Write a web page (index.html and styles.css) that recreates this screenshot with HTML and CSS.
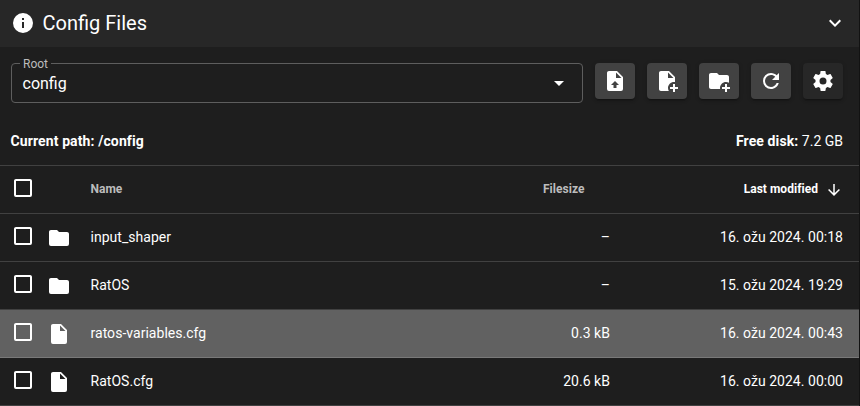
FILE: index.html
```html
<!DOCTYPE html>
<html lang="en">
<head>
<meta charset="utf-8">
<title>Config Files</title>
<link rel="stylesheet" href="styles.css">
</head>
<body>
<svg class="defs" width="0" height="0" aria-hidden="true">
  <symbol id="checkbox" viewBox="0 0 24 24"><path d="M19,3H5C3.89,3 3,3.89 3,5V19A2,2 0 0,0 5,21H19A2,2 0 0,0 21,19V5C21,3.89 20.1,3 19,3M19,5V19H5V5H19Z"/></symbol>
  <symbol id="folder" viewBox="0 0 24 24"><path d="M10,4H4C2.89,4 2,4.89 2,6V18A2,2 0 0,0 4,20H20A2,2 0 0,0 22,18V8C22,6.89 21.1,6 20,6H12L10,4Z"/></symbol>
  <symbol id="file" viewBox="0 0 24 24"><path d="M13,9V3.5L18.5,9M6,2C4.89,2 4,2.89 4,4V20A2,2 0 0,0 6,22H18A2,2 0 0,0 20,20V8L14,2H6Z"/></symbol>
</svg>
<main class="panel">
  <header class="panel-header">
    <svg class="icon" viewBox="0 0 24 24"><path d="M13,9H11V7H13M13,17H11V11H13M12,2A10,10 0 0,0 2,12A10,10 0 0,0 12,22A10,10 0 0,0 22,12A10,10 0 0,0 12,2Z"/></svg>
    <h1>Config Files</h1>
    <svg class="icon collapse" viewBox="0 0 24 24"><path d="M7.41,8.58L12,13.17L16.59,8.58L18,10L12,16L6,10L7.41,8.58Z"/></svg>
  </header>
  <div class="toolbar">
    <div class="select">
      <span class="select-label">Root</span>
      <span class="select-value">config</span>
      <svg class="icon" viewBox="0 0 24 24"><path d="M7,10L12,15L17,10H7Z"/></svg>
    </div>
    <button class="btn"><svg class="icon" viewBox="0 0 24 24"><path d="M14,2H6C4.89,2 4,2.89 4,4V20A2,2 0 0,0 6,22H18A2,2 0 0,0 20,20V8L14,2M13.5,16V19H10.5V16H8L12,12L16,16H13.5M13,9V3.5L18.5,9H13Z"/></svg></button>
    <button class="btn"><svg class="icon" viewBox="0 0 24 24"><path d="M14 2H6C4.89 2 4 2.89 4 4V20C4 21.11 4.89 22 6 22H13.81C13.28 21.09 13 20.05 13 19C13 15.69 15.69 13 19 13C19.34 13 19.67 13.03 20 13.08V8L14 2M13 9V3.5L18.5 9H13M23 20H20V23H18V20H15V18H18V15H20V18H23V20Z"/></svg></button>
    <button class="btn"><svg class="icon" viewBox="0 0 24 24"><path d="M13 19C13 19.34 13.04 19.67 13.09 20H4C2.9 20 2 19.11 2 18V6C2 4.89 2.89 4 4 4H10L12 6H20C21.1 6 22 6.89 22 8V13.81C21.12 13.3 20.1 13 19 13C15.69 13 13 15.69 13 19M20 18V15H18V18H15V20H18V23H20V20H23V18H20Z"/></svg></button>
    <button class="btn"><svg class="icon" viewBox="0 0 24 24"><path d="M17.65,6.35C16.2,4.9 14.21,4 12,4A8,8 0 0,0 4,12A8,8 0 0,0 12,20C15.73,20 18.84,17.45 19.73,14H17.65C16.83,16.33 14.61,18 12,18A6,6 0 0,1 6,12A6,6 0 0,1 12,6C13.66,6 15.14,6.69 16.22,7.78L13,11H20V4L17.65,6.35Z"/></svg></button>
    <button class="btn btn-dark"><svg class="icon" viewBox="0 0 24 24"><path d="M12,15.5A3.5,3.5 0 0,1 8.5,12A3.5,3.5 0 0,1 12,8.5A3.5,3.5 0 0,1 15.5,12A3.5,3.5 0 0,1 12,15.5M19.43,12.97C19.47,12.65 19.5,12.33 19.5,12C19.5,11.67 19.47,11.34 19.43,11L21.54,9.37C21.73,9.22 21.78,8.95 21.66,8.73L19.66,5.27C19.54,5.05 19.27,4.96 19.05,5.05L16.56,6.05C16.04,5.66 15.5,5.32 14.87,5.07L14.5,2.42C14.46,2.18 14.25,2 14,2H10C9.75,2 9.54,2.18 9.5,2.42L9.13,5.07C8.5,5.32 7.96,5.66 7.44,6.05L4.95,5.05C4.73,4.96 4.46,5.05 4.34,5.27L2.34,8.73C2.21,8.95 2.27,9.22 2.46,9.37L4.57,11C4.53,11.34 4.5,11.67 4.5,12C4.5,12.33 4.53,12.65 4.57,12.97L2.46,14.63C2.27,14.78 2.21,15.05 2.34,15.27L4.34,18.73C4.46,18.95 4.73,19.03 4.95,18.95L7.44,17.94C7.96,18.34 8.5,18.68 9.13,18.93L9.5,21.58C9.54,21.82 9.75,22 10,22H14C14.25,22 14.46,21.82 14.5,21.58L14.87,18.93C15.5,18.67 16.04,18.34 16.56,17.94L19.05,18.95C19.27,19.03 19.54,18.95 19.66,18.73L21.66,15.27C21.78,15.05 21.73,14.78 21.54,14.63L19.43,12.97Z"/></svg></button>
  </div>
  <div class="path-bar">
    <b>Current path: /config</b>
    <span><b>Free disk:</b> 7.2 GB</span>
  </div>
  <div class="table">
    <div class="row head">
      <svg class="icon check"><use href="#checkbox"/></svg>
      <span></span>
      <span>Name</span>
      <span class="size">Filesize</span>
      <span class="date sorted">Last modified<svg class="icon sort" viewBox="0 0 24 24"><path d="M11,4H13V16L18.5,10.5L19.92,11.92L12,19.84L4.08,11.92L5.5,10.5L11,16V4Z"/></svg></span>
    </div>
    <div class="row">
      <svg class="icon check"><use href="#checkbox"/></svg>
      <svg class="icon"><use href="#folder"/></svg>
      <span>input_shaper</span><span class="size">–</span><span class="date">16. ožu 2024. 00:18</span>
    </div>
    <div class="row">
      <svg class="icon check"><use href="#checkbox"/></svg>
      <svg class="icon"><use href="#folder"/></svg>
      <span>RatOS</span><span class="size">–</span><span class="date">15. ožu 2024. 19:29</span>
    </div>
    <div class="row hover">
      <svg class="icon check"><use href="#checkbox"/></svg>
      <svg class="icon"><use href="#file"/></svg>
      <span>ratos-variables.cfg</span><span class="size">0.3 kB</span><span class="date">16. ožu 2024. 00:43</span>
    </div>
    <div class="row">
      <svg class="icon check"><use href="#checkbox"/></svg>
      <svg class="icon"><use href="#file"/></svg>
      <span>RatOS.cfg</span><span class="size">20.6 kB</span><span class="date">16. ožu 2024. 00:00</span>
    </div>
  </div>
</main>
</body>
</html>
```
FILE: styles.css
```css
* { box-sizing: border-box; }
body {
  margin: 0;
  background: #121212;
  color: #fff;
  font: 14px/20px Roboto, sans-serif;
  overflow: hidden;
}
.defs { display: none; }
.icon { width: 24px; height: 24px; fill: #fff; display: block; flex: none; }
.panel { width: 859px; height: 406px; background: #1e1e1e; }
.panel-header {
  height: 47px;
  display: flex;
  align-items: center;
  padding: 0 12px 1px 11px;
  background: #272727;
}
.panel-header h1 {
  margin: 0 auto 0 7.5px;
  font-size: 20px;
  font-weight: 400;
  line-height: 32px;
}
.toolbar { display: flex; gap: 12px; padding: 16px 16px 0 11px; height: 72px; }
.select {
  position: relative;
  width: 572px;
  height: 40px;
  display: flex;
  align-items: center;
  justify-content: space-between;
  padding: 0 11px 0 10.5px;
  border: 1px solid #5e5e5e;
  border-radius: 4px;
}
.select-value { font-size: 16px; padding-top: 2px; }
.select-label {
  position: absolute;
  left: 8px;
  top: -9px;
  padding: 0 3px;
  background: #1e1e1e;
  color: #bcbcbc;
  font-size: 12px;
  line-height: 18px;
}
.btn {
  width: 40px;
  height: 36px;
  padding: 0 8px;
  border: 0;
  border-radius: 4px;
  background: #424242;
  box-shadow: 0 3px 1px -2px rgba(0,0,0,.2), 0 2px 2px rgba(0,0,0,.14), 0 1px 5px rgba(0,0,0,.12);
}
.btn-dark { background: #272727; }
.path-bar {
  height: 46px;
  display: flex;
  align-items: center;
  justify-content: space-between;
  padding: 0 16px 2px 10.5px;
}
.path-bar b { letter-spacing: .11px; }
.table { border-top: 1px solid #414141; }
.row {
  height: 48px;
  display: grid;
  grid-template-columns: 36px 43.5px 359.5px 160px 233px;
  align-items: center;
  padding-left: 11px;
  border-bottom: 1px solid #414141;
  letter-spacing: .03px;
}
.row > .icon { margin-top: 1px; }
.row > .check { margin-top: -3px; }
.row > span { padding-bottom: 2px; }
.size, .date { text-align: right; }
.head { color: #bcbcbc; font-size: 12px; font-weight: 700; }
.head .size { padding-right: 25.5px; }
.sorted { color: #fff; display: flex; align-items: center; justify-content: flex-end; }
.sort { width: 18px; height: 18px; margin: 2px 0 0 7px; }
.hover { background: #616161; border-bottom-color: #797979; }
```
